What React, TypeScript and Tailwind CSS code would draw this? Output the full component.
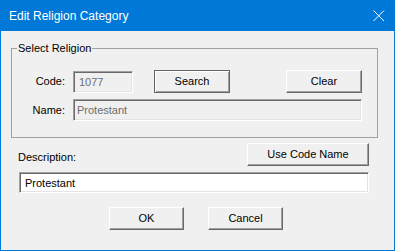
const sunken =
  "border border-t-[#a0a0a0] border-l-[#a0a0a0] border-r-white border-b-white shadow-[inset_1px_1px_0_#696969,inset_-1px_-1px_0_#e3e3e3] outline-none";

const raised =
  "border border-t-white border-l-white border-r-[#696969] border-b-[#696969] shadow-[inset_-1px_-1px_0_#a0a0a0] bg-[#f0f0f0] text-black text-[11px] leading-[13px]";

// default button gets the dark frame all round
const defaultBtn =
  "border border-[#646464] shadow-[inset_1px_1px_0_#ffffff,inset_-1px_-1px_0_#a0a0a0] bg-[#f0f0f0] text-black text-[11px] leading-[13px]";

export default function App() {
  return (
    <div className="w-[395px] h-[251px] bg-[#0078d7] flex flex-col font-['Liberation_Sans',Arial,sans-serif]">
      {/* Title bar */}
      <div className="h-[31px] shrink-0 flex items-center justify-between pl-[9px] pr-[10px] text-white text-[12px]">
        <span>Edit Religion Category</span>
        <svg width="12" height="11" viewBox="0 0 12 11" className="mt-[-1px]">
          <path d="M0.5 0.5 L11 11 M11 0.5 L0.5 11" stroke="white" strokeWidth="1" fill="none" />
        </svg>
      </div>

      {/* Client area */}
      <div className="mx-px mb-px flex-1 bg-[#f0f0f0] text-[11px] text-black flex flex-col">
        <fieldset className="ml-[10px] mt-[10px] w-[367px] border border-[#a0a0a0] pb-[16px]">
          <legend className="ml-[5px] px-[1px] leading-[14px]">Select Religion</legend>

          <div className="mt-[15px] h-[23px] flex items-center">
            <span className="w-[53px] text-right">Code:</span>
            <input
              readOnly
              value="1077"
              className={`ml-[8px] w-[60px] h-[22px] pl-[5px] bg-[#f0f0f0] text-[#6d6d6d] text-[11px] ${sunken}`}
            />
            <button className={`ml-[21px] w-[76px] h-[23px] ${defaultBtn}`}>Search</button>
            <button className={`ml-[56px] w-[76px] h-[23px] ${raised}`}>Clear</button>
          </div>

          <div className="mt-[6px] flex items-center">
            <span className="w-[53px] text-right">Name:</span>
            <input
              readOnly
              value="Protestant"
              className={`ml-[8px] w-[289px] h-[22px] pl-[3px] bg-[#f0f0f0] text-[#6d6d6d] text-[11px] ${sunken}`}
            />
          </div>
        </fieldset>

        <div className="mt-[5px] ml-[17px] w-[351px] flex items-start justify-between">
          <span className="pt-[8px] leading-[13px]">Description:</span>
          <button className={`w-[122px] h-[23px] ${raised}`}>Use Code Name</button>
        </div>

        <input
          readOnly
          value="Protestant"
          className={`mt-[6px] ml-[18px] w-[350px] h-[21px] pl-[5px] bg-white text-black text-[11px] ${sunken}`}
        />

        <div className="mt-[14px] ml-[108px] flex gap-[24px]">
          <button className={`w-[75px] h-[23px] ${raised}`}>OK</button>
          <button className={`w-[75px] h-[23px] ${raised}`}>Cancel</button>
        </div>
      </div>
    </div>
  );
}
